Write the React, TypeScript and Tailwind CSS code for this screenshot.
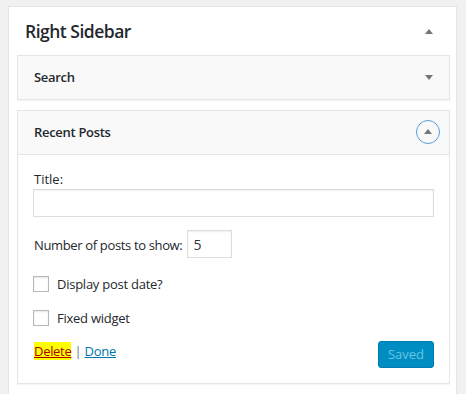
import React from "react";

const font = { fontFamily: '"Open Sans", "Noto Sans", Arial, sans-serif' };

const Tri = ({ up = true }: { up?: boolean }) => (
  <svg width="8" height="5" viewBox="0 0 8 5" className="block">
    <path d={up ? "M0 5 L4 0 L8 5 Z" : "M0 0 L8 0 L4 5 Z"} fill="#72777c" />
  </svg>
);

export default function App() {
  return (
    <div
      className="min-h-screen bg-[#f1f1f1] pt-[6px] pl-[8px] text-[13px] text-[#23282d]"
      style={font}
    >
      <div className="w-[449px] h-[400px] bg-white border border-[#e5e5e5] shadow-[0_1px_1px_rgba(0,0,0,0.04)] pl-[8px] pr-[6px]">
        {/* sidebar header */}
        <div className="h-[48px] flex items-center justify-between pl-[8px] pr-[17px]">
          <h2 className="text-[17.5px] font-semibold text-[#23282d] tracking-[-0.5px]">
            Right Sidebar
          </h2>
          <Tri />
        </div>

        {/* Search widget (collapsed) */}
        <div className="h-[45px] bg-[#f9f9f9] border border-[#e5e5e5] shadow-[0_1px_1px_rgba(0,0,0,0.04)] flex items-center justify-between pl-[16px] pr-[16px]">
          <span className="font-semibold tracking-[-0.3px]">Search</span>
          <Tri up={false} />
        </div>

        {/* Recent Posts widget (open) */}
        <div className="mt-[10px] border border-[#e5e5e5] shadow-[0_1px_1px_rgba(0,0,0,0.04)] bg-white">
          <div className="h-[44px] bg-[#f9f9f9] border-b border-[#e5e5e5] flex items-center justify-between pl-[16px] pr-[9px]">
            <span className="font-semibold tracking-[-0.3px]">Recent Posts</span>
            <div className="w-[24px] h-[24px] rounded-full border-[1.5px] border-[#5b9dd9] flex items-center justify-center mt-[-2px]">
              <Tri />
            </div>
          </div>

          <div className="px-[15px] pt-[15px] pb-[15px]">
            <div className="leading-[18px] pl-[1px]">Title:</div>
            <div className="mt-[1px] h-[28px] border border-[#ddd] shadow-[inset_0_1px_2px_rgba(0,0,0,0.07)]" />

            <div className="mt-[13px] flex items-center">
              <span className="pl-[1px] mt-[3px] tracking-[-0.35px]">Number of posts to show:</span>
              <div className="ml-[5px] w-[45px] h-[28px] border border-[#ddd] shadow-[inset_0_1px_2px_rgba(0,0,0,0.07)] flex items-center pl-[5px] text-[14px] text-[#32373c]">
                5
              </div>
            </div>

            <div className="mt-[18px] flex items-center leading-[16px]">
              <div className="w-[16px] h-[16px] border border-[#b4b9be] shadow-[inset_0_1px_2px_rgba(0,0,0,0.1)]" />
              <span className="ml-[8px] tracking-[-0.25px]">Display post date?</span>
            </div>

            <div className="mt-[18px] flex items-center leading-[16px]">
              <div className="w-[16px] h-[16px] border border-[#b4b9be] shadow-[inset_0_1px_2px_rgba(0,0,0,0.1)]" />
              <span className="ml-[8px] tracking-[-0.25px]">Fixed widget</span>
            </div>

            <div className="mt-[15px] flex items-start justify-between">
              <div className="pl-[1px] mt-[1px] leading-[18px]">
                <span className="bg-[#ffff00] text-[#a00] underline tracking-[-0.3px]">Delete</span>
                <span className="text-[#72777c] mx-[3px]">|</span>
                <span className="text-[#0073aa] underline tracking-[-0.3px]">Done</span>
              </div>
              <div className="w-[56px] h-[27px] rounded-[3px] bg-[#008ec2] border border-[#007cb2] text-[#66c6e4] flex items-center justify-center">
                Saved
              </div>
            </div>
          </div>
        </div>
      </div>
    </div>
  );
}
